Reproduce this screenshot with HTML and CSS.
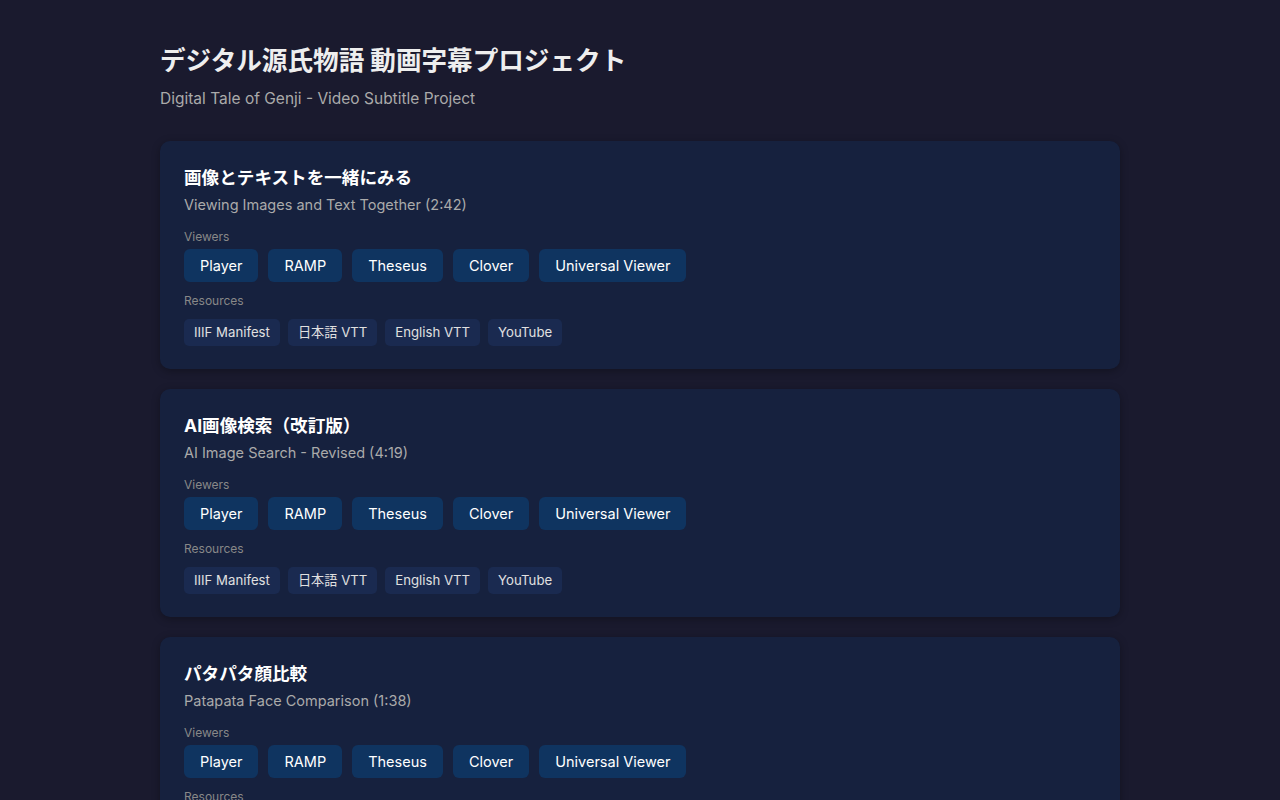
FILE: index.html
```html
<!DOCTYPE html>
<html lang="ja">
<head>
    <meta charset="UTF-8">
    <title>デジタル源氏物語 動画字幕プロジェクト</title>
    <link rel="stylesheet" href="styles.css">
</head>
<body>
<div class="wrap">
    <header class="head">
        <h1>デジタル源氏物語 動画字幕プロジェクト</h1>
        <p class="sub">Digital Tale of Genji - Video Subtitle Project</p>
    </header>

    <div class="card">
        <h2>画像とテキストを一緒にみる</h2>
        <p class="en">Viewing Images and Text Together (2:42)</p>
        <div class="label">Viewers</div>
        <div class="btns">
            <a class="btn">Player</a>
            <a class="btn">RAMP</a>
            <a class="btn">Theseus</a>
            <a class="btn">Clover</a>
            <a class="btn">Universal Viewer</a>
        </div>
        <div class="label">Resources</div>
        <div class="tags">
            <a class="tag">IIIF Manifest</a>
            <a class="tag">日本語 VTT</a>
            <a class="tag">English VTT</a>
            <a class="tag">YouTube</a>
        </div>
    </div>

    <div class="card">
        <h2>AI画像検索（改訂版）</h2>
        <p class="en">AI Image Search - Revised (4:19)</p>
        <div class="label">Viewers</div>
        <div class="btns">
            <a class="btn">Player</a>
            <a class="btn">RAMP</a>
            <a class="btn">Theseus</a>
            <a class="btn">Clover</a>
            <a class="btn">Universal Viewer</a>
        </div>
        <div class="label">Resources</div>
        <div class="tags">
            <a class="tag">IIIF Manifest</a>
            <a class="tag">日本語 VTT</a>
            <a class="tag">English VTT</a>
            <a class="tag">YouTube</a>
        </div>
    </div>

    <div class="card">
        <h2>パタパタ顔比較</h2>
        <p class="en">Patapata Face Comparison (1:38)</p>
        <div class="label">Viewers</div>
        <div class="btns">
            <a class="btn">Player</a>
            <a class="btn">RAMP</a>
            <a class="btn">Theseus</a>
            <a class="btn">Clover</a>
            <a class="btn">Universal Viewer</a>
        </div>
        <div class="label">Resources</div>
        <div class="tags">
            <a class="tag">IIIF Manifest</a>
            <a class="tag">日本語 VTT</a>
            <a class="tag">English VTT</a>
            <a class="tag">YouTube</a>
        </div>
    </div>
</div>
</body>
</html>
```

FILE: styles.css
```css
body{
    margin: 0;
    background-color: #1a1a2e;
    color: #eeeeee;
    font-family: Inter, "Noto Sans CJK JP", sans-serif;
}
.wrap{
    width: 960px;
    margin: 0 auto;
    padding: 43px 0 40px 0;
}
.head{
    margin-bottom: 31px;
}
.head h1{
    margin: 0 0 9px 0;
    font-size: 25.6px;
    line-height: 36px;
    font-weight: bold;
    color: #eeeeee;
}
.head .sub{
    margin: 0;
    font-size: 15.5px;
    line-height: 22px;
    color: #aaaaaa;
}
.card{
    background-color: #16213e;
    border-radius: 10px;
    padding: 24px 24px 23px 24px;
    margin-bottom: 20px;
    box-shadow: 0 2px 8px rgba(0, 0, 0, 0.3);
}
.card h2{
    margin: 0 0 4px 0;
    font-size: 17.6px;
    line-height: 26px;
    font-weight: bold;
    color: #ffffff;
}
.card .en{
    margin: 0 0 14px 0;
    font-size: 14.5px;
    line-height: 20px;
    color: #aaaaaa;
}
.label{
    font-size: 12px;
    line-height: 16px;
    color: #888888;
    margin-bottom: 4px;
}
.btns{
    display: flex;
    gap: 10px;
    margin-bottom: 11px;
}
.btn{
    background-color: #0f3460;
    color: #ffffff;
    font-size: 14.5px;
    line-height: 17px;
    padding: 8px 16px;
    border-radius: 6px;
}
.tags{
    display: flex;
    gap: 8px;
    margin-top: 10px;
}
.tag{
    background-color: #1a2a50;
    color: #e0e0e0;
    font-size: 13.2px;
    line-height: 17px;
    padding: 5px 10px;
    border-radius: 5px;
}
```
